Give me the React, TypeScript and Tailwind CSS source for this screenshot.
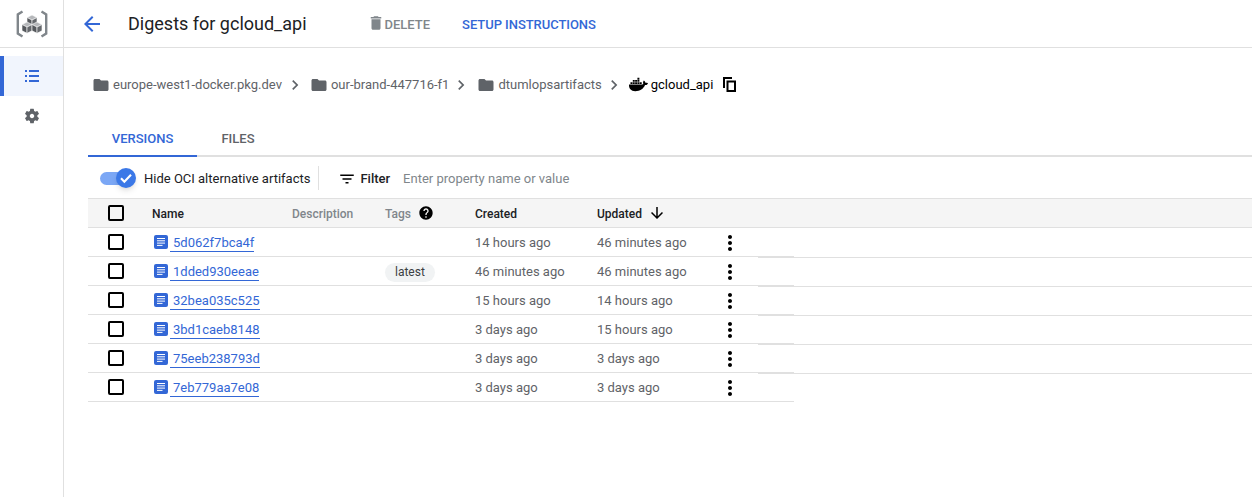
import React from "react";
import { FaDocker } from "react-icons/fa";

const rows = [
  { id: "5d062f7bca4f", created: "14 hours ago", updated: "46 minutes ago" },
  { id: "1dded930eeae", tag: "latest", created: "46 minutes ago", updated: "46 minutes ago" },
  { id: "32bea035c525", created: "15 hours ago", updated: "14 hours ago" },
  { id: "3bd1caeb8148", created: "3 days ago", updated: "15 hours ago" },
  { id: "75eeb238793d", created: "3 days ago", updated: "3 days ago" },
  { id: "7eb779aa7e08", created: "3 days ago", updated: "3 days ago" },
];

const Folder = () => (
  <svg width="18" height="18" viewBox="0 0 24 24" className="shrink-0" fill="#5f6368">
    <path d="M10 4H4c-1.100 0-2 .9-2 2v12c0 1.100.9 2 2 2h16c1.100 0 2-.9 2-2V8c0-1.100-.9-2-2-2h-8l-2-2z" />
  </svg>
);
const Chevron = () => (
  <svg width="20" height="20" viewBox="0 0 24 24" className="shrink-0" fill="#5f6368">
    <path d="M8.600 16.600 13.200 12 8.600 7.400 10 6l6 6-6 6z" />
  </svg>
);
const Checkbox = () => <div className="w-4 h-4 border-2 border-black rounded-[2px]" />;
const Doc = () => (
  <svg width="14" height="14" viewBox="0 0 14 14" className="shrink-0">
    <rect width="14" height="14" rx="2" fill="#3367d6" />
    <path d="M3 3.500h8M3 5.800h8M3 8.100h8M3 10.400h5.500" stroke="#fff" strokeWidth="1" />
  </svg>
);
const Dots = () => (
  <svg width="24" height="24" viewBox="0 0 24 24" fill="#000">
    <path d="M12 8c1.100 0 2-.9 2-2s-.9-2-2-2-2 .9-2 2 .9 2 2 2zm0 2c-1.100 0-2 .9-2 2s.9 2 2 2 2-.9 2-2-.9-2-2-2zm0 6c-1.100 0-2 .9-2 2s.9 2 2 2 2-.9 2-2-.9-2-2-2z" />
  </svg>
);
const Cube = ({ x, y }: { x: number; y: number }) => (
  <g transform={`translate(${x} ${y})`} stroke="#fff" strokeWidth="0.6" strokeLinejoin="round">
    <path d="M0-5.500 5-3 0-.4-5-3z" fill="#b5b7ba" />
    <path d="M-5-3 0-.4V5.800L-5 3.200z" fill="#55585c" />
    <path d="M5-3 0-.4V5.800L5 3.200z" fill="#66696d" />
  </g>
);
const Logo = () => (
  <svg width="32" height="28" viewBox="0 0 32 28" fill="none">
    <path d="M6.500 1.500 1.800 4.500v19l4.700 3M25.500 1.500l4.700 3v19l-4.700 3" stroke="#80868b" strokeWidth="2.400" strokeLinejoin="miter" />
    <Cube x={16} y={10.500} />
    <Cube x={11} y={17.500} />
    <Cube x={21} y={17.500} />
  </svg>
);

const GRID = "grid grid-cols-[64px_140px_93px_90px_122px_123px_36px] items-center";

export default function App() {
  return (
    <div className="flex w-[1252px] h-[497px] overflow-hidden bg-white font-['Roboto',sans-serif]">
      <aside className="w-[64px] shrink-0 border-r border-[#e0e0e0] flex flex-col">
        <div className="h-[48px] flex items-center justify-center border-b border-[#e0e0e0] -mr-px">
          <Logo />
        </div>
        <div className="mt-2 h-10 bg-[#f1f5fd] border-l-4 border-[#3367d6] flex items-center justify-center pr-1">
          <svg width="16" height="14" viewBox="0 0 16 14" fill="#3367d6">
            <path d="M1 1h2v2H1zM5 1h10v2H5zM1 6h2v2H1zM5 6h10v2H5zM1 11h2v2H1zM5 11h10v2H5z" />
          </svg>
        </div>
        <div className="h-10 flex items-center justify-center">
          <svg width="18" height="18" viewBox="0 0 24 24" fill="#5f6368">
            <path d="M19.140 12.940c.04-.3.06-.61.06-.94 0-.32-.02-.64-.07-.94l2.030-1.580a.49.49 0 0 0 .12-.61l-1.920-3.320a.488.488 0 0 0-.59-.22l-2.390.96c-.5-.38-1.030-.7-1.620-.94l-.36-2.540a.484.484 0 0 0-.48-.41h-3.840c-.24 0-.43.17-.47.41l-.36 2.540c-.59.24-1.130.57-1.620.94l-2.390-.96c-.22-.08-.47 0-.59.22L2.740 8.870c-.12.21-.08.47.12.61l2.030 1.580c-.05.3-.09.63-.09.94s.02.64.07.94l-2.030 1.580a.49.49 0 0 0-.12.61l1.920 3.320c.12.22.37.29.59.22l2.390-.96c.5.38 1.030.7 1.620.94l.36 2.540c.05.24.24.41.48.41h3.840c.24 0 .44-.17.47-.41l.36-2.540c.59-.24 1.130-.56 1.620-.94l2.390.96c.22.08.47 0 .59-.22l1.920-3.320c.12-.22.07-.47-.12-.61l-2.010-1.580zM12 15c-1.650 0-3-1.350-3-3s1.350-3 3-3 3 1.350 3 3-1.350 3-3 3z" />
          </svg>
        </div>
      </aside>

      <main className="flex-1 min-w-0 flex flex-col">
        <header className="h-[48px] shrink-0 border-b border-[#e0e0e0] flex items-center">
          <svg width="24" height="24" viewBox="0 0 24 24" fill="#3367d6" className="ml-4">
            <path d="M20 11H7.830l5.590-5.590L12 4l-8 8 8 8 1.410-1.410L7.830 13H20v-2z" />
          </svg>
          <h1 className="ml-6 text-[18px] leading-6 text-[#202124]">Digests for gcloud_api</h1>
          <div className="ml-[60px] pt-[2px] flex items-center gap-0.5 text-[13px] font-medium text-[#80868b]">
            <svg width="18" height="18" viewBox="0 0 24 24" fill="#80868b" className="-mr-0.5 -mt-[3px]">
              <path d="M6 19c0 1.100.9 2 2 2h8c1.100 0 2-.9 2-2V7H6v12zM19 4h-3.500l-1-1h-5l-1 1H5v2h14V4z" />
            </svg>
            <span>DELETE</span>
          </div>
          <span className="ml-8 pt-[2px] text-[13px] tracking-[-0.05px] font-medium text-[#3367d6]">SETUP INSTRUCTIONS</span>
        </header>

        <div className="flex-1 pl-6">
          <nav className="h-[18px] mt-[28px] flex items-center text-[13px] text-[#5f6368] ml-[4px]">
            <Folder />
            <span className="ml-[3px]">europe-west1-docker.pkg.dev</span>
            <span className="ml-[3px] mr-[5px]"><Chevron /></span>
            <Folder />
            <span className="ml-[3px]">our-brand-447716-f1</span>
            <span className="ml-[2px] mr-[6px]"><Chevron /></span>
            <Folder />
            <span className="ml-[3px]">dtumlopsartifacts</span>
            <span className="ml-[2px] mr-[5px]"><Chevron /></span>
            <FaDocker size={19} color="#000" className="shrink-0 -mt-[2px]" />
            <span className="ml-[3px] text-black">gcloud_api</span>
            <svg width="13" height="15" viewBox="0 0 13 15" fill="#000" fillRule="evenodd" className="ml-[10px] -mt-[2px]">
              <path d="M0 0h9v2H2v9H0z" />
              <path d="M3.500 3.500H13V15H3.500zM5.500 5.500V13H11V5.500z" />
            </svg>
          </nav>

          <div className="mt-[26px] h-[37px] flex border-b-2 border-[#e0e0e0] text-[13px] font-medium">
            <div className="w-[109px] h-[37px] border-b-2 border-[#3367d6] text-[#3367d6] flex items-center justify-center pt-[2px]">VERSIONS</div>
            <div className="w-[82px] h-[35px] text-[#5f6368] flex items-center justify-center pt-[2px]">FILES</div>
          </div>

          <div className="h-[41px] pt-[2px] flex items-center text-[13px]">
            <div className="relative ml-3 w-[30px] h-[13px] rounded-full bg-[#7ba7f5] mr-3">
              <div className="absolute right-[-6px] -top-1 w-5 h-5 rounded-full bg-[#3b78e7] shadow-md flex items-center justify-center">
                <svg width="16" height="16" viewBox="0 0 24 24" fill="none" stroke="#fff" strokeWidth="3.200"><path d="M4.500 12.500l5 5L19.500 7" /></svg>
              </div>
            </div>
            <span className="ml-[2px] text-[#202124]">Hide OCI alternative artifacts</span>
            <div className="ml-2 mr-5 h-6 w-px bg-[#e0e0e0] -mt-[2px]" />
            <svg width="18" height="18" viewBox="0 0 24 24" fill="#000" className="-ml-px"><path d="M10 18h4v-2h-4v2zM3 6v2h18V6H3zm3 7h12v-2H6v2z" /></svg>
            <span className="ml-[4px] font-medium text-[#202124]">Filter</span>
            <span className="ml-[13px] text-[#80868b]">Enter property name or value</span>
          </div>

          <div className={`${GRID} h-[30px] bg-[#f5f5f5] border-y border-[#e0e0e0] pt-[2px] text-[12px] font-medium`}>
            <div className="pl-5 flex -mt-[2px]"><Checkbox /></div>
            <div className="text-[#202124]">Name</div>
            <div className="text-[#80868b]">Description</div>
            <div className="flex items-center gap-[7px] text-[#80868b]">
              Tags
              <svg width="16" height="16" viewBox="0 0 24 24" fill="#000" className="-mt-[2px]"><path d="M12 2C6.480 2 2 6.480 2 12s4.480 10 10 10 10-4.480 10-10S17.520 2 12 2zm1 17h-2v-2h2v2zm2.070-7.750-.9.920C13.450 12.900 13 13.500 13 15h-2v-.5c0-1.100.45-2.100 1.170-2.830l1.240-1.260c.37-.36.590-.86.590-1.410 0-1.100-.9-2-2-2s-2 .9-2 2H8c0-2.210 1.790-4 4-4s4 1.790 4 4c0 .88-.36 1.680-.93 2.250z" /></svg>
            </div>
            <div className="text-[#202124]">Created</div>
            <div className="flex items-center gap-[6px] text-[#202124]">
              Updated
              <svg width="18" height="18" viewBox="0 0 24 24" fill="#000" className="-mt-[2px]"><path d="m20 12-1.410-1.410L13 16.170V4h-2v12.170l-5.580-5.590L4 12l8 8 8-8z" /></svg>
            </div>
            <div />
          </div>

          {rows.map((r, i) => (
            <div key={r.id} className={`${GRID} relative w-[706px] h-[29px] border-b border-[#e0e0e0] text-[13px] text-[#5f6368]`}>
              <div className="pl-5 flex"><Checkbox /></div>
              <div className="flex items-center">
                <span className="ml-[2px] -mt-px"><Doc /></span>
                <span className="ml-[2px] pl-[3px] pt-[2px] leading-[17px] border-b border-[#3367d6] text-[#3367d6]">{r.id}</span>
              </div>
              <div />
              <div className="pt-[2px]">
                {r.tag && <span className="inline-flex h-[19px] items-center rounded-full bg-[#f1f3f4] px-[10px] text-[12px] text-[#3c4043]">{r.tag}</span>}
              </div>
              <div className="pt-[2px]">{r.created}</div>
              <div className="pt-[2px]">{r.updated}</div>
              <div className="flex justify-start -ml-[2px] pt-px"><Dots /></div>
              {i < rows.length - 1 && <div className="absolute left-[670px] top-[29px] w-[494px] h-px bg-[#e0e0e0]" />}
            </div>
          ))}
        </div>
      </main>
    </div>
  );
}
